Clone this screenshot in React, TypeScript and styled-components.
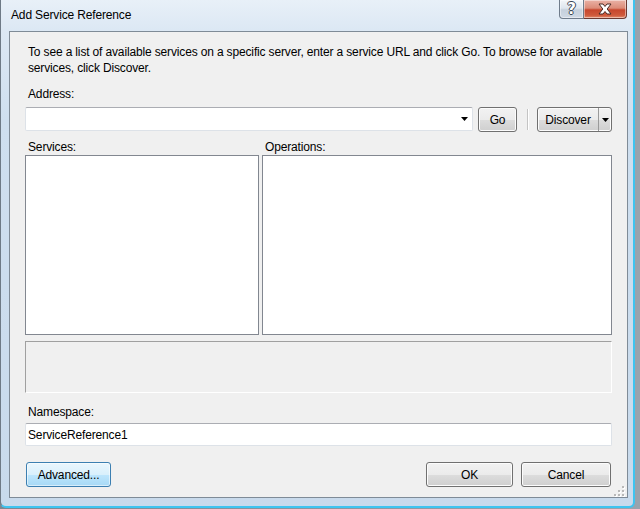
import React from "react";
import styled, { createGlobalStyle } from "styled-components";

//------------------------------------------------------

const GlobalStyle = createGlobalStyle`
  html, body {
    margin: 0;
    padding: 0;
    background: #8a949e;
  }
  body {
    font-family: "Segoe UI", "Liberation Sans", Arial, sans-serif;
    font-size: 12px;
    letter-spacing: -0.15px;
    color: #000;
  }
`;

const Window = styled.div`
  width: 640px;
  height: 509px;
  overflow: hidden;
  background: linear-gradient(to right, #7c8893, #99a3ad);
`;

const Frame = styled.div`
  box-sizing: border-box;
  width: 635px;
  height: 508px;
  display: flex;
  flex-direction: column;
  border-left: 1px solid #6e7a86;
  border-right: 2px solid #3ec4f0;
  border-bottom: 2px solid #3ec4f0;
  border-radius: 0 0 6px 6px;
  background: linear-gradient(to bottom, #e8f0f8 0px, #dce8f4 30px, #cfdfef 120px, #c8daec 100%);
`;

const TitleBar = styled.div`
  height: 31px;
  display: flex;
  align-items: flex-start;
  padding-left: 10px;
`;

const Title = styled.div`
  margin-top: 7px;
  line-height: 16px;
  color: #000;
`;

const CaptionGroup = styled.div`
  margin-left: auto;
  margin-right: 6px;
  display: flex;
  height: 19px;
`;

const CaptionButton = styled.div<{ $close?: boolean }>`
  box-sizing: border-box;
  width: ${p => (p.$close ? "43px" : "25px")};
  height: 19px;
  display: flex;
  align-items: center;
  justify-content: center;
  border: 1px solid ${p => (p.$close ? "#6b3a33" : "#6f7c8b")};
  border-top: none;
  border-left: ${p => (p.$close ? "none" : undefined)};
  border-radius: ${p => (p.$close ? "0 0 4px 0" : "0 0 0 4px")};
  background: ${p =>
    p.$close
      ? "linear-gradient(to bottom, #eab2a6 0%, #dc8c79 45%, #c7462d 55%, #cf5a3c 85%, #e38a6c 100%)"
      : "linear-gradient(to bottom, #f3f6f9 0%, #dfe6ee 45%, #c5d0dc 55%, #cfd9e4 100%)"};
  box-shadow: inset 0 0 0 1px rgba(255, 255, 255, 0.45);
`;

const HelpGlyph = styled.span`
  font-family: "DejaVu Sans", sans-serif;
  font-weight: bold;
  font-size: 15px;
  line-height: 15px;
  color: #fff;
  text-shadow: 1px 0 0 #3b4754, -1px 0 0 #3b4754, 0 1px 0 #3b4754, 0 -1px 0 #3b4754;
`;

const Client = styled.div`
  position: relative;
  flex: 1;
  margin: 0 5px 8px 8px;
  border: 1px solid #7f8b97;
  background: #f0f0f0;
  padding: 12px 15px 0 15px;
  display: flex;
  flex-direction: column;
`;

const Intro = styled.p`
  margin: 0;
  padding-left: 3px;
  line-height: 16px;
  white-space: nowrap;
`;

const Label = styled.div<{ $top: number }>`
  margin-top: ${p => p.$top}px;
  padding-left: 3px;
  line-height: 16px;
`;

const AddressRow = styled.div`
  margin-top: 5px;
  height: 24px;
  display: flex;
  align-items: flex-start;
`;

const ComboBox = styled.div`
  box-sizing: border-box;
  flex: 1;
  height: 24px;
  display: flex;
  align-items: center;
  justify-content: flex-end;
  padding-right: 4px;
  background: #fff;
  border: 1px solid #dde2e8;
  border-top-color: #abadb3;
  border-radius: 2px;
`;

const Button = styled.div<{ $w: number; $focused?: boolean }>`
  box-sizing: border-box;
  width: ${p => p.$w}px;
  height: 25px;
  display: flex;
  align-items: center;
  justify-content: center;
  border: 1px solid ${p => (p.$focused ? "#3c7fb1" : "#707070")};
  border-radius: 3px;
  box-shadow: inset 0 0 0 1px ${p => (p.$focused ? "rgba(255,255,255,0.55)" : "#fcfcfc")};
  background: ${p =>
    p.$focused
      ? "linear-gradient(to bottom, #eaf6fd 0%, #d9f0fc 50%, #bee6fd 50%, #a7d9f5 100%)"
      : "linear-gradient(to bottom, #f2f2f2 0%, #ebebeb 50%, #dddddd 50%, #cfcfcf 100%)"};
  color: #000;
`;

const GoButton = styled(Button)`
  margin-left: 5px;
`;

const SplitButton = styled(Button)`
  justify-content: flex-start;
  padding: 0;
`;

const SplitMain = styled.div`
  flex: 1;
  height: 100%;
  display: flex;
  align-items: center;
  justify-content: center;
  border-right: 1px solid #9a9a9a;
`;

const SplitArrow = styled.div`
  width: 12px;
  display: flex;
  align-items: center;
  justify-content: center;
`;

const Separator = styled.div`
  width: 1px;
  height: 21px;
  margin: 2px 9px 0 10px;
  background: #c4c4c4;
  box-shadow: 1px 0 0 #fff;
`;

const ListGrid = styled.div`
  display: grid;
  grid-template-columns: 234px 1fr;
  column-gap: 3px;
`;

const ListBox = styled.div`
  box-sizing: border-box;
  height: 180px;
  background: #fff;
  border: 1px solid #828790;
`;

const Details = styled.div`
  box-sizing: border-box;
  margin-top: 6px;
  height: 52px;
  background: #f0f0f0;
  border: 1px solid #a0a0a0;
  border-right-color: #fff;
  border-bottom-color: #fff;
`;

const TextBox = styled.div`
  box-sizing: border-box;
  margin-top: 3px;
  height: 23px;
  display: flex;
  align-items: center;
  padding-left: 2px;
  background: #fff;
  border: 1px solid #dde2e8;
  border-top-color: #abadb3;
  border-radius: 2px;
`;

const ButtonRow = styled.div`
  margin-top: 16px;
  padding: 0 1px;
  display: flex;
  gap: 8px;
`;

const Spacer = styled.div`
  flex: 1;
`;

const Grip = styled.svg`
  position: absolute;
  right: 2px;
  bottom: 0;
`;

//------------------------------------------------------

const DropArrow = () => (
  <svg width="7" height="4" viewBox="0 0 7 4">
    <path d="M0 0 H7 L3.5 4 Z" fill="#000" />
  </svg>
);

const CloseGlyph = () => (
  <svg width="16" height="12" viewBox="0 0 16 12">
    <path
      d="M2 1 H6 L8 3.5 L10 1 H14 L10.2 6 L14 11 H10 L8 8.5 L6 11 H2 L5.8 6 Z"
      fill="#fff"
      stroke="#4a2a24"
      strokeWidth="1"
      strokeLinejoin="round"
    />
  </svg>
);

const GripDots = () => (
  <Grip width="11" height="11" viewBox="0 0 11 11">
    {[
      [8, 0],
      [8, 4],
      [4, 4],
      [8, 8],
      [4, 8],
      [0, 8],
    ].map(([x, y], i) => (
      <g key={i}>
        <rect x={x + 1} y={y + 1} width="2" height="2" fill="#fff" />
        <rect x={x} y={y} width="2" height="2" fill="#b8b8b8" />
      </g>
    ))}
  </Grip>
);

export default function App() {
  return (
    <Window>
      <GlobalStyle />
      <Frame>
        <TitleBar>
          <Title>Add Service Reference</Title>
          <CaptionGroup>
            <CaptionButton>
              <HelpGlyph>?</HelpGlyph>
            </CaptionButton>
            <CaptionButton $close>
              <CloseGlyph />
            </CaptionButton>
          </CaptionGroup>
        </TitleBar>

        <Client>
          <Intro>
            To see a list of available services on a specific server, enter a service URL and click Go. To browse for available
            <br />
            services, click Discover.
          </Intro>

          <Label $top={10}>Address:</Label>
          <AddressRow>
            <ComboBox>
              <DropArrow />
            </ComboBox>
            <GoButton $w={39}>Go</GoButton>
            <Separator />
            <SplitButton $w={75}>
              <SplitMain>Discover</SplitMain>
              <SplitArrow>
                <DropArrow />
              </SplitArrow>
            </SplitButton>
          </AddressRow>

          <ListGrid>
            <Label $top={8}>Services:</Label>
            <Label $top={8}>Operations:</Label>
            <ListBox />
            <ListBox />
          </ListGrid>

          <Details />

          <Label $top={11}>Namespace:</Label>
          <TextBox>ServiceReference1</TextBox>

          <ButtonRow>
            <Button $w={85} $focused>Advanced...</Button>
            <Spacer />
            <Button $w={87}>OK</Button>
            <Button $w={90}>Cancel</Button>
          </ButtonRow>

          <GripDots />
        </Client>
      </Frame>
    </Window>
  );
}
